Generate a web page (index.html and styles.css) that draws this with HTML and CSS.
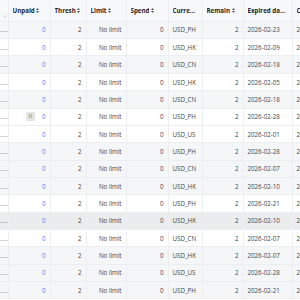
FILE: index.html
```html
<!DOCTYPE html>
<html>
<head>
<meta charset="utf-8">
<link rel="stylesheet" href="styles.css">
</head>
<body>
<div class="wrap">
<table class="grid">
<colgroup>
<col class="w0"><col class="w1"><col class="w2"><col class="w3"><col class="w4"><col class="w5"><col class="w6"><col class="w7"><col class="w8">
</colgroup>
<thead>
<tr>
<th class="first"><svg class="grip" width="4" height="4" viewBox="0 0 4 4"><path d="M3.5 0.5 L0.5 3.5 M3.5 2 L2 3.5" stroke="#bfbfbf" stroke-width="0.6" fill="none"/></svg></th>
<th><span class="h"><span class="t">Unpaid</span><svg class="sort" width="3" height="5" viewBox="0 0 6 10"><path d="M3 0 L6 4 L0 4Z M3 10 L0 6 L6 6Z" fill="#555"/></svg></span></th>
<th><span class="h"><span class="t">Thresh</span><svg class="sort" width="3" height="5" viewBox="0 0 6 10"><path d="M3 0 L6 4 L0 4Z M3 10 L0 6 L6 6Z" fill="#555"/></svg></span></th>
<th><span class="h"><span class="t">Limit</span><svg class="sort" width="3" height="5" viewBox="0 0 6 10"><path d="M3 0 L6 4 L0 4Z M3 10 L0 6 L6 6Z" fill="#555"/></svg></span></th>
<th><span class="h"><span class="t">Spend</span><svg class="sort" width="3" height="5" viewBox="0 0 6 10"><path d="M3 0 L6 4 L0 4Z M3 10 L0 6 L6 6Z" fill="#555"/></svg></span></th>
<th><span class="h"><span class="t">Currency</span></span></th>
<th><span class="h"><span class="t">Remain</span><svg class="sort" width="3" height="5" viewBox="0 0 6 10"><path d="M3 0 L6 4 L0 4Z M3 10 L0 6 L6 6Z" fill="#555"/></svg></span></th>
<th class="tight"><span class="h"><span class="t">Expired date</span></span></th>
<th><span class="h"><span class="t">Created date</span></span></th>
</tr>
</thead>
<tbody>
<tr class="g"><td class="first">…</td><td class="num"><a class="lnk">0</a></td><td class="num">2</td><td class="num">No limit</td><td class="num">0</td><td>USD_PH</td><td class="num">2</td><td>2026-02-23</td><td>2026-01-23</td></tr>
<tr><td class="first">…</td><td class="num"><a class="lnk">0</a></td><td class="num">2</td><td class="num">No limit</td><td class="num">0</td><td>USD_HK</td><td class="num">2</td><td>2026-02-09</td><td>2026-01-09</td></tr>
<tr class="g"><td class="first">…</td><td class="num"><a class="lnk">0</a></td><td class="num">2</td><td class="num">No limit</td><td class="num">0</td><td>USD_CN</td><td class="num">2</td><td>2026-02-18</td><td>2026-01-18</td></tr>
<tr><td class="first">…</td><td class="num"><a class="lnk">0</a></td><td class="num">2</td><td class="num">No limit</td><td class="num">0</td><td>USD_HK</td><td class="num">2</td><td>2026-02-05</td><td>2026-01-05</td></tr>
<tr class="g"><td class="first">…</td><td class="num"><a class="lnk">0</a></td><td class="num">2</td><td class="num">No limit</td><td class="num">0</td><td>USD_CN</td><td class="num">2</td><td>2026-02-18</td><td>2026-01-18</td></tr>
<tr><td class="first">…</td><td class="num"><span class="cellrow"><span class="badge">0</span><a class="lnk">0</a></span></td><td class="num">2</td><td class="num">No limit</td><td class="num">0</td><td>USD_PH</td><td class="num">2</td><td>2026-02-28</td><td>2026-01-28</td></tr>
<tr><td class="first">…</td><td class="num"><a class="lnk">0</a></td><td class="num">2</td><td class="num">No limit</td><td class="num">0</td><td>USD_US</td><td class="num">2</td><td>2026-02-01</td><td>2026-01-01</td></tr>
<tr class="g"><td class="first">…</td><td class="num"><a class="lnk">0</a></td><td class="num">2</td><td class="num">No limit</td><td class="num">0</td><td>USD_PH</td><td class="num">2</td><td>2026-02-28</td><td>2026-01-28</td></tr>
<tr class="g"><td class="first">…</td><td class="num"><a class="lnk">0</a></td><td class="num">2</td><td class="num">No limit</td><td class="num">0</td><td>USD_CN</td><td class="num">2</td><td>2026-02-07</td><td>2026-01-07</td></tr>
<tr class="g"><td class="first">…</td><td class="num"><a class="lnk">0</a></td><td class="num">2</td><td class="num">No limit</td><td class="num">0</td><td>USD_HK</td><td class="num">2</td><td>2026-02-10</td><td>2026-01-10</td></tr>
<tr><td class="first">…</td><td class="num"><a class="lnk">0</a></td><td class="num">2</td><td class="num">No limit</td><td class="num">0</td><td>USD_PH</td><td class="num">2</td><td>2026-02-21</td><td>2026-01-21</td></tr>
<tr class="hov"><td class="first">…</td><td class="num"><a class="lnk">0</a></td><td class="num">2</td><td class="num">No limit</td><td class="num">0</td><td>USD_HK</td><td class="num">2</td><td>2026-02-10</td><td>2026-01-10</td></tr>
<tr><td class="first">…</td><td class="num"><a class="lnk">0</a></td><td class="num">2</td><td class="num">No limit</td><td class="num">0</td><td>USD_CN</td><td class="num">2</td><td>2026-02-07</td><td>2026-01-07</td></tr>
<tr class="g"><td class="first">…</td><td class="num"><a class="lnk">0</a></td><td class="num">2</td><td class="num">No limit</td><td class="num">0</td><td>USD_HK</td><td class="num">2</td><td>2026-02-07</td><td>2026-01-07</td></tr>
<tr class="g"><td class="first">…</td><td class="num"><a class="lnk">0</a></td><td class="num">2</td><td class="num">No limit</td><td class="num">0</td><td>USD_US</td><td class="num">2</td><td>2026-02-28</td><td>2026-01-28</td></tr>
<tr class="g"><td class="first">…</td><td class="num"><a class="lnk">0</a></td><td class="num">2</td><td class="num">No limit</td><td class="num">0</td><td>USD_PH</td><td class="num">2</td><td>2026-02-21</td><td>2026-01-21</td></tr>
</tbody>
</table>
</div>
</body>
</html>
```

FILE: styles.css
```css
html, body {
  margin: 0;
  padding: 0;
  background: #ffffff;
}
.wrap {
  width: 300px;
  height: 300px;
  overflow: hidden;
}
.grid {
  border-collapse: collapse;
  table-layout: fixed;
  width: 352px;
  font-family: "Open Sans", "Liberation Sans", sans-serif;
  font-size: 6.2px;
  color: #444444;
  border-bottom: 1px solid #dfe6e1;
}
.w0 { width: 8px; }
.w1 { width: 42px; }
.w2 { width: 36px; }
.w3 { width: 40px; }
.w4 { width: 42px; }
.w5 { width: 34px; }
.w6 { width: 41px; }
.w7 { width: 49px; }
.w8 { width: 60px; }
thead tr {
  height: 21.3px;
}
th {
  background: #f7f8fa;
  color: #262626;
  font-weight: 700;
  text-align: left;
  padding: 0 4px;
  border-right: 1px solid #eceef1;
  border-bottom: 1px solid #eceef1;
  white-space: nowrap;
  overflow: hidden;
}
th.tight {
  padding-right: 6px;
}
th.first {
  position: relative;
  padding: 0;
}
.grip {
  position: absolute;
  right: 1px;
  bottom: 3px;
}
.h {
  display: flex;
  align-items: center;
  gap: 1.5px;
  min-width: 0;
}
.t {
  overflow: hidden;
  text-overflow: ellipsis;
  white-space: nowrap;
}
.sort {
  flex: none;
}
tbody tr {
  height: 17.35px;
}
td {
  padding: 0 4px;
  border-right: 1px solid #eceef1;
  border-bottom: 1px solid #eceef1;
  white-space: nowrap;
  overflow: hidden;
  text-overflow: ellipsis;
}
td.first {
  padding: 0 5px 0 0;
  text-align: right;
  color: #888888;
}
td.num {
  text-align: right;
}
tr.g td {
  background: #f5f6f8;
}
tr.hov td {
  background: #ebecee;
}
.lnk {
  color: #3f86f5;
}
.cellrow {
  display: flex;
  justify-content: flex-end;
  align-items: center;
  gap: 7px;
}
.badge {
  display: inline-block;
  background: #e4e4e4;
  color: #666666;
  border-radius: 1.5px;
  padding: 2px 3px;
  line-height: 5px;
  font-size: 5.5px;
}
```
